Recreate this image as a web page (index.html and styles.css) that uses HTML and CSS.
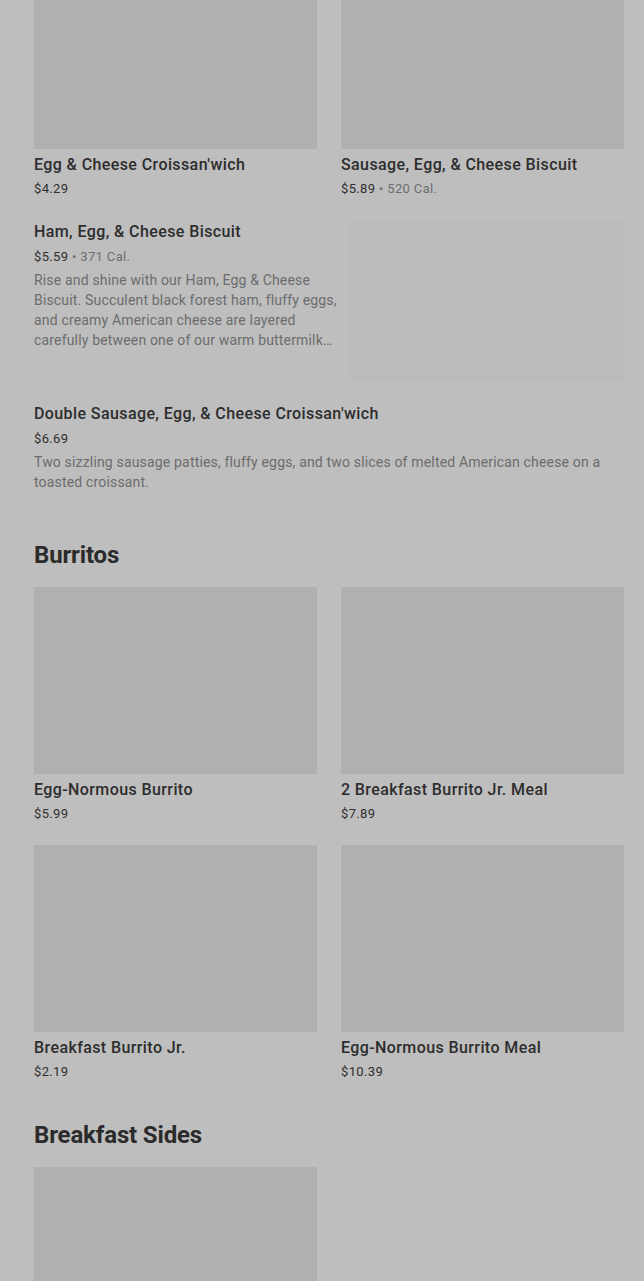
FILE: index.html
```html
<!DOCTYPE html>
<html>
<head>
    <title>Breakfast Menu</title>
    <link rel="stylesheet" href="styles.css">
</head>
<body>
    <div class="menu">
        <div class="grid first">
            <div class="card">
                <div class="card-img"></div>
                <div class="item-title">Egg &amp; Cheese Croissan'wich</div>
                <div class="item-meta">$4.29</div>
            </div>
            <div class="card">
                <div class="card-img"></div>
                <div class="item-title">Sausage, Egg, &amp; Cheese Biscuit</div>
                <div class="item-meta">$5.89 <span class="cal">&bull; 520 Cal.</span></div>
            </div>
        </div>

        <div class="row-item">
            <div class="row-text">
                <div class="item-title">Ham, Egg, &amp; Cheese Biscuit</div>
                <div class="item-meta row-meta">$5.59 <span class="cal">&bull; 371 Cal.</span></div>
                <div class="item-desc clamp">Rise and shine with our Ham, Egg &amp; Cheese Biscuit. Succulent black forest ham, fluffy eggs, and creamy American cheese are layered carefully between one of our warm buttermilk biscuits for a hearty start to your morning.</div>
            </div>
            <div class="row-img"></div>
        </div>

        <div class="row-item plain">
            <div class="row-text wide">
                <div class="item-title">Double Sausage, Egg, &amp; Cheese Croissan'wich</div>
                <div class="item-meta row-meta">$6.69</div>
                <div class="item-desc">Two sizzling sausage patties, fluffy eggs, and two slices of melted American cheese on a toasted croissant.</div>
            </div>
        </div>

        <h2 class="section-title">Burritos</h2>
        <div class="grid">
            <div class="card">
                <div class="card-img"></div>
                <div class="item-title">Egg-Normous Burrito</div>
                <div class="item-meta">$5.99</div>
            </div>
            <div class="card">
                <div class="card-img"></div>
                <div class="item-title">2 Breakfast Burrito Jr. Meal</div>
                <div class="item-meta">$7.89</div>
            </div>
            <div class="card">
                <div class="card-img"></div>
                <div class="item-title">Breakfast Burrito Jr.</div>
                <div class="item-meta">$2.19</div>
            </div>
            <div class="card">
                <div class="card-img"></div>
                <div class="item-title">Egg-Normous Burrito Meal</div>
                <div class="item-meta">$10.39</div>
            </div>
        </div>

        <h2 class="section-title">Breakfast Sides</h2>
        <div class="grid">
            <div class="card">
                <div class="card-img"></div>
            </div>
        </div>
    </div>
</body>
</html>
```

FILE: styles.css
```css
body {
    margin: 0;
    padding: 0;
    background-color: #bebebe;
    font-family: Roboto, "Liberation Sans", sans-serif;
    color: #2b2b2b;
    overflow: hidden;
}

.menu {
    padding: 0 20px 0 34px;
}

.grid {
    display: grid;
    grid-template-columns: 1fr 1fr;
    column-gap: 24px;
    row-gap: 21px;
}

.grid.first {
    margin-top: -38px;
}

.card-img {
    height: 187px;
    background-color: #b0b0b0;
}

.item-title {
    font-size: 16px;
    font-weight: 500;
    line-height: 24px;
    letter-spacing: 0.4px;
    margin-top: 4px;
    color: #2d2d2d;
}

.item-meta {
    font-size: 13px;
    line-height: 20px;
    letter-spacing: 0.35px;
    margin-top: 2px;
    color: #2f2f2f;
}

.cal {
    color: #6e6e6e;
}

.row-item {
    display: flex;
    gap: 9px;
    margin-top: 21px;
}

.row-item.plain {
    margin-top: 22px;
}

.row-text {
    width: 306px;
    flex-shrink: 0;
}

.row-text.wide {
    width: auto;
    flex: 1;
}

.row-item .item-title {
    margin-top: 0;
}

.row-meta {
    margin-top: 3px;
}

.plain .row-meta {
    margin-top: 3px;
}

.item-desc {
    font-size: 14px;
    line-height: 20px;
    letter-spacing: 0.17px;
    color: #6c6c6c;
    margin-top: 3px;
}

.clamp {
    display: -webkit-box;
    -webkit-line-clamp: 4;
    -webkit-box-orient: vertical;
    overflow: hidden;
}

.row-img {
    flex: 1;
    height: 158px;
    margin-top: 2px;
    background-color: #bbbbbb;
}

.section-title {
    font-size: 24px;
    font-weight: 700;
    line-height: 32px;
    margin: 47px 0 16px;
    color: #2b2b2b;
    letter-spacing: -0.15px;
}

.grid + .section-title {
    margin-top: 37px;
}
```
